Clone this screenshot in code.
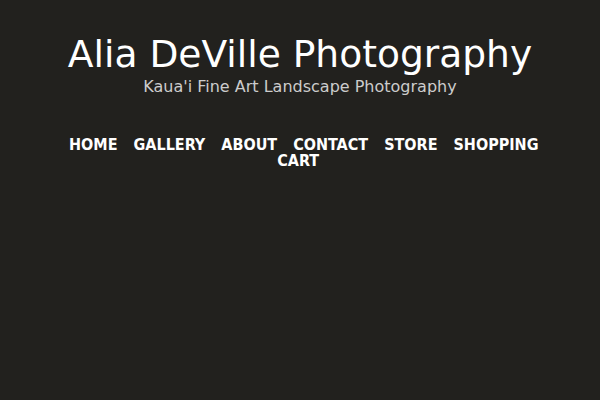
export default function App() {
  const items = ["HOME", "GALLERY", "ABOUT", "CONTACT", "STORE", "SHOPPING CART"];
  return (
    <div className="w-[600px] h-[400px] bg-[#22211e] text-white overflow-hidden" style={{ fontFamily: '"DejaVu Sans", sans-serif' }}>
      <div className="pt-[32px] text-center">
        <h1 className="text-[37.6px] leading-[44px] text-white">Alia DeVille Photography</h1>
        <p className="text-[16px] leading-[20px] text-[#cccccc] mt-[1px]">Kaua'i Fine Art Landscape Photography</p>
      </div>
      <nav
        className="mt-[40px] mx-auto w-[480px] pl-[2px] text-center text-[16px] leading-[16px] font-bold"
        style={{ fontFamily: '"DejaVu Sans Condensed", "DejaVu Sans", sans-serif' }}
      >
        {items.map((t, i) => (
          <span key={i}>
            {i > 0 && " "}
            <a className="mx-[5.5px]">{t}</a>
          </span>
        ))}
      </nav>
    </div>
  );
}
